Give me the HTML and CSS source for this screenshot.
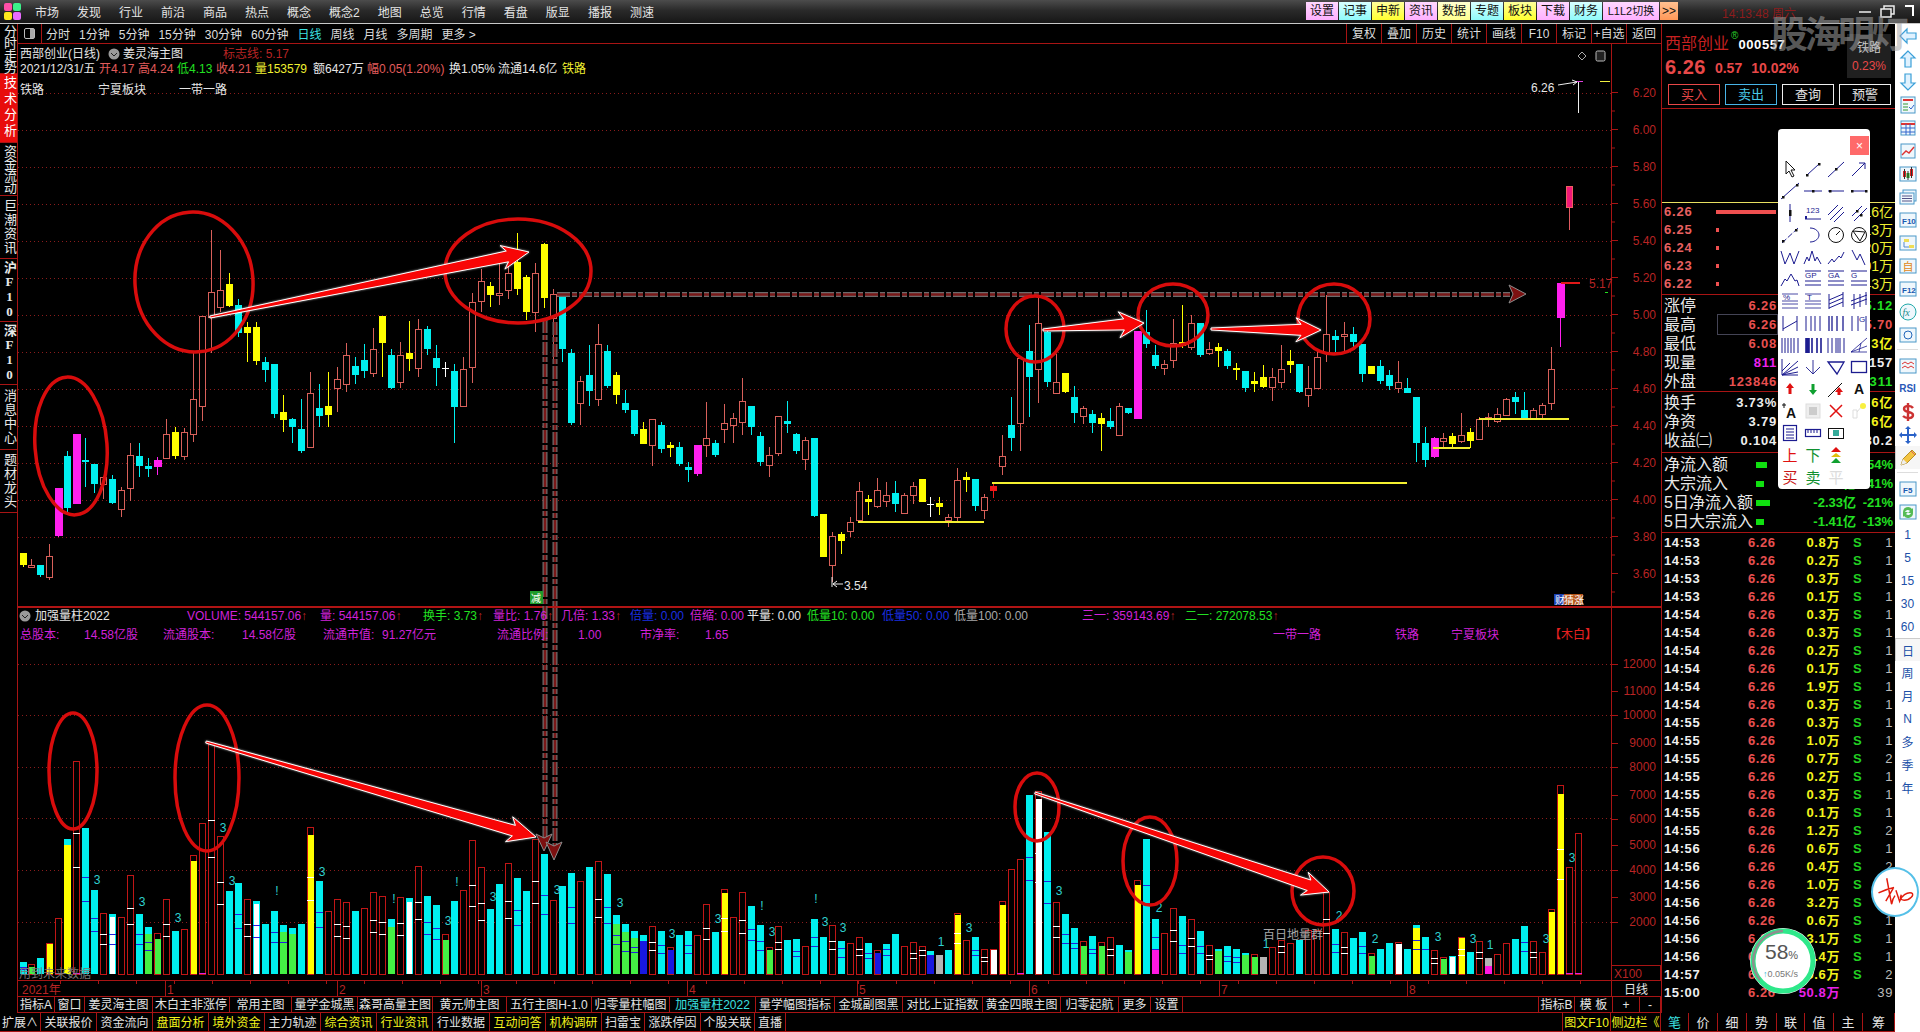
FILE: index.html
```html
<!DOCTYPE html>
<html lang="zh">
<head>
<meta charset="utf-8">
<title>西部创业 日线</title>
<link rel="stylesheet" href="styles.css">
</head>
<body>
<div class="app">
  <header class="topbar">
    <div class="logo"><i class="lp"></i><i class="lg"></i><i class="ly"></i><i class="lv"></i></div>
    <nav class="menu"><span>市场</span><span>发现</span><span>行业</span><span>前沿</span><span>商品</span><span>热点</span><span>概念</span><span>概念2</span><span>地图</span><span>总览</span><span>行情</span><span>看盘</span><span>版显</span><span>播报</span><span>测速</span></nav>
    <div class="quick"><span class="qp">设置</span><span class="qc">记事</span><span class="qy">申新</span><span class="qp">资讯</span><span class="ql">数据</span><span class="qc">专题</span><span class="qy">板块</span><span class="qp">下载</span><span class="qc">财务</span><span class="qp wide">L1L2切换</span><span class="qo">&gt;&gt;</span></div>
    <div class="clock">14:13:48 周六</div>
    <div class="winctl">
      <svg viewBox="0 0 60 20"><path class="wc" d="M4 10h12M26 7h10v8H26zM29 7V4h10v8h-3"/><path class="wc2" d="M50 4h8v10"/></svg>
    </div>
  </header>

  <div class="body">
    <div class="left">
      <div class="workspace">
        <aside class="sidebar">
          <div class="sb tight">分时走势</div>
          <div class="sb on">技术分析</div>
          <div class="sb tight">资金流动</div>
          <div class="sb">巨潮资讯</div>
          <div class="sb fk">沪F10</div>
          <div class="sb fk">深F10</div>
          <div class="sb">消息中心</div>
          <div class="sb">题材龙头</div>
        </aside>

        <main class="center">
          <div class="periods">
            <div class="toggle"><i></i></div>
            <div class="plist"><span>分时</span><span>1分钟</span><span>5分钟</span><span>15分钟</span><span>30分钟</span><span>60分钟</span><span class="act">日线</span><span>周线</span><span>月线</span><span>多周期</span><span>更多 &gt;</span></div>
            <div class="tools"><span>复权</span><span>叠加</span><span>历史</span><span>统计</span><span>画线</span><span>F10</span><span>标记</span><span>+自选</span><span>返回</span></div>
          </div>

          <svg id="chart" class="chart" viewBox="18 44 1643 952" width="1643" height="952">
            <g class="t" transform="translate(0,1)">
              <text x="20" y="57" class="w">西部创业(日线)</text>
              <circle cx="114" cy="53" r="5.5" class="ci"/><path d="M111 52l3 3 3-3" class="cv"/>
              <text x="123" y="57" class="w">姜灵海主图</text>
              <text x="223" y="57" class="rd">标志线: 5.17</text>
              <text x="20" y="72" class="w">2021/12/31/五</text>
              <text x="99" y="72" class="rr">开4.17</text>
              <text x="138" y="72" class="rr">高4.24</text>
              <text x="177" y="72" class="gg">低4.13</text>
              <text x="216" y="72" class="rr">收4.21</text>
              <text x="255" y="72" class="yy">量153579</text>
              <text x="313" y="72" class="w">额6427万</text>
              <text x="367" y="72" class="rr">幅0.05(1.20%)</text>
              <text x="449" y="72" class="w">换1.05%</text>
              <text x="498" y="72" class="w">流通14.6亿</text>
              <text x="562" y="72" class="yy">铁路</text>
              <text x="20" y="93" class="w">铁路</text>
              <text x="98" y="93" class="w">宁夏板块</text>
              <text x="179" y="93" class="w">一带一路</text>
              <path d="M1582 51l4 4-4 4-4-4z" class="dm"/>
              <rect x="1596" y="50" width="9" height="10" rx="1.5" class="tg"/>
              <text x="1531" y="91" class="w">6.26</text>
              <text x="844" y="589" class="w">3.54</text>
              <text x="1589" y="287" class="rd">5.17</text>

              <circle cx="25" cy="615" r="5.5" class="ci"/><path d="M22 614l3 3 3-3" class="cv"/>
              <text x="35" y="619" class="w">加强量柱2022</text>
              <text x="187" y="619" class="mg">VOLUME: 544157.06<tspan class="rd">↑</tspan></text>
              <text x="320" y="619" class="mg">量: 544157.06<tspan class="rd">↑</tspan></text>
              <text x="423" y="619" class="gg">换手: 3.73<tspan class="rd">↑</tspan></text>
              <text x="493" y="619" class="mg">量比: 1.76<tspan class="rd">↑</tspan></text>
              <text x="561" y="619" class="mg">几倍: 1.33<tspan class="rd">↑</tspan></text>
              <text x="630" y="619" class="bl">倍量: 0.00</text>
              <text x="690" y="619" class="mg">倍缩: 0.00</text>
              <text x="747" y="619" class="w">平量: 0.00</text>
              <text x="807" y="619" class="gg">低量10: 0.00</text>
              <text x="882" y="619" class="bl">低量50: 0.00</text>
              <text x="954" y="619" class="gy">低量100: 0.00</text>
              <text x="1082" y="619" class="mg">三一: 359143.69<tspan class="rd">↑</tspan></text>
              <text x="1185" y="619" class="gg">二一: 272078.53<tspan class="rd">↑</tspan></text>

              <text x="20" y="638" class="mg">总股本:</text><text x="84" y="638" class="mg">14.58亿股</text>
              <text x="163" y="638" class="mg">流通股本:</text><text x="242" y="638" class="mg">14.58亿股</text>
              <text x="323" y="638" class="mg">流通市值:</text><text x="382" y="638" class="mg">91.27亿元</text>
              <text x="497" y="638" class="mg">流通比例:</text><text x="578" y="638" class="mg">1.00</text>
              <text x="640" y="638" class="mg">市净率:</text><text x="705" y="638" class="mg">1.65</text>
              <text x="1273" y="638" class="mg">一带一路</text>
              <text x="1395" y="638" class="mg">铁路</text>
              <text x="1451" y="638" class="mg">宁夏板块</text>
              <text x="1549" y="638" class="rb">【木白】</text>

              <text x="1263" y="938" class="gy">百日地量群</text>
              <text x="19" y="977" class="dim">用到未来数据</text>
              <text x="22" y="993" class="rd">2021年</text>
              <text x="167" y="993" class="rd">1</text>
              <text x="339" y="993" class="rd">2</text>
              <text x="483" y="993" class="rd">3</text>
              <text x="689" y="993" class="rd">4</text>
              <text x="859" y="993" class="rd">5</text>
              <text x="1031" y="993" class="rd">6</text>
              <text x="1221" y="993" class="rd">7</text>
              <text x="1409" y="993" class="rd">8</text>
              <text x="1614" y="977" class="rd">X100</text>
              <text x="1624" y="993" class="w">日线</text>

              <rect x="530" y="590" width="13" height="13" class="tag-g"/>
              <text x="531" y="601" class="tagt">减</text>
              <rect x="1554" y="593" width="10" height="11" class="tag-b"/>
              <rect x="1564" y="593" width="19" height="11" class="tag-o"/>
              <text x="1555" y="603" class="tagt">财</text>
              <text x="1564" y="603" class="tagt">猜涨</text>
            </g>
          </svg>

          <div class="tabs1">
            <span>指标A</span><span>窗口</span><span>姜灵海主图</span><span>木白主非涨停</span><span>常用主图</span><span>量学金城黑</span><span>森哥高量主图</span><span>黄元帅主图</span><span>五行主图H-1.0</span><span>归零量柱幅图</span><span class="act">加强量柱2022</span><span>量学幅图指标</span><span>金城副图黑</span><span>对比上证指数</span><span>黄金四眼主图</span><span>归零起航</span><span>更多</span><span>设置</span><span class="fill"></span><span>指标B</span><span>模 板</span><span>+</span><span>-</span>
          </div>
        </main>

        <section class="panel">
          <div class="quote">
            <div class="qname"><span class="nm">西部创业</span><sup class="reg">®</sup><span class="cd">000557</span></div>
            <div class="qprice"><b>6.26</b><span>0.57</span><span>10.02%</span></div>
            <div class="qbtns"><span class="b1">买入</span><span class="b2">卖出</span><span>查询</span><span>预警</span></div>
            <div class="sector"><span>铁路</span><b>0.23%</b></div>
          </div>
          <div class="gap"></div>
          <div class="book">
            <div class="br"><span>6.26</span><i class="long"></i><span>2.16亿</span></div>
            <div class="br"><span>6.25</span><i></i><span>1.13万</span></div>
            <div class="br"><span>6.24</span><i></i><span>1.20万</span></div>
            <div class="br"><span>6.23</span><i></i><span>1.01万</span></div>
            <div class="br"><span>6.22</span><i></i><span>1.43万</span></div>
          </div>
          <div class="stats s5">
            <div class="sr"><span>涨停</span><span class="red">6.26</span><span class="grn">5.12</span></div>
            <div class="sr"><span>最高</span><span class="red boxed">6.26</span><span class="red">5.70</span></div>
            <div class="sr"><span>最低</span><span class="red">6.08</span><span class="yel">1.3亿</span></div>
            <div class="sr"><span>现量</span><span class="mag">811</span><span class="wht">247157</span></div>
            <div class="sr"><span>外盘</span><span class="red">123846</span><span class="grn">123311</span></div>
          </div>
          <div class="stats s3">
            <div class="sr"><span>换手</span><span class="wht">3.73%</span><span class="yel">14.6亿</span></div>
            <div class="sr"><span>净资</span><span class="wht">3.79</span><span class="yel">14.6亿</span></div>
            <div class="sr"><span>收益㈡</span><span class="wht">0.104</span><span class="wht">80.2</span></div>
          </div>
          <div class="flows">
            <div class="fr"><span>净流入额</span><i class="f1"></i><span>-0.79亿</span><span>-54%</span></div>
            <div class="fr"><span>大宗流入</span><i class="f2"></i><span>-0.60亿</span><span>-41%</span></div>
            <div class="fr"><span>5日净流入额</span><i class="f3"></i><span>-2.33亿</span><span>-21%</span></div>
            <div class="fr"><span>5日大宗流入</span><i class="f2"></i><span>-1.41亿</span><span>-13%</span></div>
          </div>
          <div class="trades">
            <div class="tr"><span>14:53</span><span>6.26</span><span>0.8万</span><span>S</span><span>1</span></div>
            <div class="tr"><span>14:53</span><span>6.26</span><span>0.2万</span><span>S</span><span>1</span></div>
            <div class="tr"><span>14:53</span><span>6.26</span><span>0.3万</span><span>S</span><span>1</span></div>
            <div class="tr"><span>14:53</span><span>6.26</span><span>0.1万</span><span>S</span><span>1</span></div>
            <div class="tr"><span>14:54</span><span>6.26</span><span>0.3万</span><span>S</span><span>1</span></div>
            <div class="tr"><span>14:54</span><span>6.26</span><span>0.3万</span><span>S</span><span>1</span></div>
            <div class="tr"><span>14:54</span><span>6.26</span><span>0.2万</span><span>S</span><span>1</span></div>
            <div class="tr"><span>14:54</span><span>6.26</span><span>0.1万</span><span>S</span><span>1</span></div>
            <div class="tr"><span>14:54</span><span>6.26</span><span>1.9万</span><span>S</span><span>1</span></div>
            <div class="tr"><span>14:54</span><span>6.26</span><span>0.3万</span><span>S</span><span>1</span></div>
            <div class="tr"><span>14:55</span><span>6.26</span><span>0.3万</span><span>S</span><span>1</span></div>
            <div class="tr"><span>14:55</span><span>6.26</span><span>1.0万</span><span>S</span><span>1</span></div>
            <div class="tr"><span>14:55</span><span>6.26</span><span>0.7万</span><span>S</span><span>2</span></div>
            <div class="tr"><span>14:55</span><span>6.26</span><span>0.2万</span><span>S</span><span>1</span></div>
            <div class="tr"><span>14:55</span><span>6.26</span><span>0.3万</span><span>S</span><span>1</span></div>
            <div class="tr"><span>14:55</span><span>6.26</span><span>0.1万</span><span>S</span><span>1</span></div>
            <div class="tr"><span>14:55</span><span>6.26</span><span>1.2万</span><span>S</span><span>2</span></div>
            <div class="tr"><span>14:56</span><span>6.26</span><span>0.6万</span><span>S</span><span>1</span></div>
            <div class="tr"><span>14:56</span><span>6.26</span><span>0.4万</span><span>S</span><span>2</span></div>
            <div class="tr"><span>14:56</span><span>6.26</span><span>1.0万</span><span>S</span><span>1</span></div>
            <div class="tr"><span>14:56</span><span>6.26</span><span>3.2万</span><span>S</span><span>1</span></div>
            <div class="tr"><span>14:56</span><span>6.26</span><span>0.6万</span><span>S</span><span>1</span></div>
            <div class="tr"><span>14:56</span><span>6.26</span><span>3.1万</span><span>S</span><span>1</span></div>
            <div class="tr"><span>14:56</span><span>6.26</span><span>0.4万</span><span>S</span><span>1</span></div>
            <div class="tr"><span>14:57</span><span>6.26</span><span>0.6万</span><span>S</span><span>2</span></div>
            <div class="tr last"><span>15:00</span><span>6.26</span><span>50.8万</span><span></span><span>39</span></div>
          </div>
        </section>
      </div>

      <footer class="tabs2">
        <span>扩展∧</span><span>关联报价</span><span>资金流向</span><span class="yel">盘面分析</span><span class="yel">境外资金</span><span>主力轨迹</span><span class="yel">综合资讯</span><span class="yel">行业资讯</span><span>行业数据</span><span class="yel">互动问答</span><span class="yel">机构调研</span><span>扫雷宝</span><span>涨跌停因</span><span>个股关联</span><span>直播</span><span class="fill"></span><span class="yel">图文F10</span><span class="yel">侧边栏《</span><span class="act big">笔</span><span class="big">价</span><span class="big">细</span><span class="big">势</span><span class="big">联</span><span class="big">值</span><span class="big">主</span><span class="big">筹</span>
      </footer>
    </div>

    <nav class="rail" id="rail">
      <div class="ri"><svg viewBox="0 0 20 20"><path class="ar" d="M9 3 2 10l7 7v-4h9V7H9z"/></svg></div>
      <div class="ri"><svg viewBox="0 0 20 20"><path class="ar" d="M10 2 3 9h4v9h6V9h4z"/></svg></div>
      <div class="ri"><svg viewBox="0 0 20 20"><path class="ar" d="M10 18 3 11h4V2h6v9h4z"/></svg></div>
      <div class="ri"><svg viewBox="0 0 20 20"><rect x="3" y="2" width="14" height="16" class="bx"/><path d="M5 5h10" stroke="#d33" stroke-width="2"/><path d="M5 9h5M5 12h5M5 15h5" stroke="#393"/><path d="M11 12l2 2 3-4" stroke="#36c" fill="none"/></svg></div>
      <div class="ri"><svg viewBox="0 0 20 20"><rect x="3" y="3" width="14" height="14" class="bx"/><path d="M3 6h14" stroke="#d33" stroke-width="2"/><path d="M3 10h14M3 14h14M8 6v11M12 6v11" stroke="#36c"/></svg></div>
      <div class="ri"><svg viewBox="0 0 20 20"><rect x="3" y="3" width="14" height="14" class="bx"/><path d="M4 14l4-4 3 2 5-6" stroke="#d33" fill="none" stroke-width="1.4"/></svg></div>
      <div class="ri"><svg viewBox="0 0 20 20"><rect x="2" y="3" width="16" height="14" class="bx"/><path d="M5 7h3v6H5zM12 5h3v7h-3z" fill="#d22"/><path d="M8.500 9h3v5h-3z" fill="#2a2"/><path d="M6.500 5v10M13.500 3v11M10 7v9" stroke="#333"/></svg></div>
      <div class="ri"><svg viewBox="0 0 20 20"><rect x="5" y="3" width="13" height="11" class="bx"/><rect x="2" y="6" width="14" height="11" class="bx"/><path d="M4 9h10M4 11.500h10M4 14h10" stroke="#558"/></svg></div>
      <div class="ri"><svg viewBox="0 0 20 20"><rect x="2" y="3" width="16" height="14" class="bx"/><text x="4" y="14" class="rt">F10</text></svg></div>
      <div class="ri"><svg viewBox="0 0 20 20"><rect x="2" y="3" width="16" height="14" class="bx"/><path d="M6 6h5v3H6zM11 12h5v3h-5z" fill="#ed5"/><path d="M6 9v5h5" stroke="#58c" fill="none"/></svg></div>
      <div class="ri"><svg viewBox="0 0 20 20"><rect x="2" y="3" width="16" height="14" class="bx"/><text x="4.500" y="15" class="ro">自</text></svg></div>
      <div class="ri"><svg viewBox="0 0 20 20"><rect x="2" y="3" width="16" height="14" class="bx"/><text x="4" y="14" class="rt">F12</text></svg></div>
      <div class="ri"><svg viewBox="0 0 20 20"><circle cx="10" cy="10" r="8" class="bx tl"/><text x="4.500" y="14" class="rg">fx</text></svg></div>
      <div class="ri"><svg viewBox="0 0 20 20"><rect x="2" y="3" width="16" height="14" class="bx"/><circle cx="10" cy="10" r="4" fill="none" stroke="#26b"/></svg></div>
      <div class="rsep"></div>
      <div class="ri"><svg viewBox="0 0 20 20"><rect x="2" y="3" width="16" height="14" class="bx"/><path d="M4 8l3-2 3 2 3-2 3 2M4 12l3-2 3 2 3-2 3 2" stroke="#d33" fill="none"/></svg></div>
      <div class="ri rsi">RSI</div>
      <div class="ri"><svg viewBox="0 0 20 20"><path d="M15 6c-2-3-9-3-9 1 0 4 9 2 9 6 0 4-7 4-10 1M10 1v18" stroke="#c33" stroke-width="2.400" fill="none"/></svg></div>
      <div class="ri"><svg viewBox="0 0 20 20"><path d="M10 1l3 3h-2v5h5V7l3 3-3 3v-2h-5v5h2l-3 3-3-3h2v-5H4v2l-3-3 3-3v2h5V4H7z" fill="#2a62c8"/></svg></div>
      <div class="ri sel"><svg viewBox="0 0 20 20"><path d="M3 17l2-6L14 2l4 4-9 9z" fill="#f4c542" stroke="#b6902a"/><path d="M3 17l2-6 4 4z" fill="#eee"/><path d="M13 3l4 4" stroke="#d65"/></svg></div>
      <div class="rsep"></div>
      <div class="ri"><svg viewBox="0 0 20 20"><rect x="2" y="3" width="16" height="14" class="bx"/><text x="5" y="14" class="rt">F5</text></svg></div>
      <div class="ri"><svg viewBox="0 0 20 20"><rect x="2" y="3" width="16" height="14" class="bx"/><path d="M5 10a5 5 0 0 1 9-3l1-1v5h-5l2-2a3 3 0 0 0-5 1zM15 11a5 5 0 0 1-9 3l-1 1v-5h5l-2 2a3 3 0 0 0 5-1z" fill="#5b5"/></svg></div>
      <div class="ri txt">1</div>
      <div class="ri txt">5</div>
      <div class="ri txt">15</div>
      <div class="ri txt">30</div>
      <div class="ri txt">60</div>
      <div class="ri txt cur">日</div>
      <div class="ri txt">周</div>
      <div class="ri txt">月</div>
      <div class="ri txt">N</div>
      <div class="ri txt">多</div>
      <div class="ri txt">季</div>
      <div class="ri txt">年</div>
    </nav>
  </div>

  <div class="watermark">股海明灯</div>

  <div class="palette">
    <button class="pclose">×</button>
    <div class="pgrid" id="pgrid"></div>
  </div>

  <div class="sig"><svg viewBox="0 0 48 48"><path d="M6 25c6-3 12-5 17-6M15 9l5 27c1 3 0-3 4-8M22 20l-8 14M25 22l4 12c2-6 8-10 13-9 4 2-2 8-8 8-4 0-5-3-3-6" fill="none" stroke="#e21b0c" stroke-width="1.600"/></svg></div>

  <div class="speed">
    <svg viewBox="0 0 66 66"><circle cx="33" cy="33" r="30" class="sp1"/><path d="M33 3A30 30 0 0 0 10 52" class="sp2"/></svg>
    <div class="spt"><b>58</b><small>%</small></div>
    <div class="spk"><i>↑</i>0.05K/s</div>
  </div>
</div>
<script src="chart.js"></script>
</body>
</html>
```

FILE: styles.css
```css
*{box-sizing:border-box}
html,body{margin:0;padding:0;background:#000}
body{width:1920px;height:1032px;overflow:hidden;font-family:"Liberation Sans","Noto Sans CJK SC",sans-serif;font-size:12px;color:#ddd}
.app{position:relative;width:1920px;height:1032px;display:flex;flex-direction:column}

/* top */
.topbar{height:24px;display:flex;align-items:center;background:linear-gradient(#4c4c4c,#2a2a2a 45%,#161616);border-bottom:1px solid #c8c8c8;flex:none}
.logo{width:18px;height:17px;margin-left:4px;display:grid;grid-template-columns:8px 8px;grid-auto-rows:8px;gap:1px}
.logo i{border-radius:2px}
.lp{background:#ff4fa8}.lg{background:#3cf08a}.ly{background:#ffe81c}.lv{background:#e86cff}
.menu{display:flex;gap:18px;margin-left:13px;font-size:12px;color:#e4e4e4}
.quick{position:absolute;left:1306px;top:2px;display:flex;gap:1px;color:#111}
.quick span{width:32px;height:18px;line-height:18px;text-align:center;display:block}
.quick .wide{width:56px;font-size:11px}
.quick .qo{width:18px}
.qp{background:linear-gradient(#ffd8ff,#ffb0ff)}
.qc{background:linear-gradient(#d8ffff,#90fafa)}
.qy{background:linear-gradient(#ffff9a,#ffff30)}
.ql{background:linear-gradient(#ffffd0,#ffff90)}
.qo{background:linear-gradient(#ffc090,#ff9858)}
.clock{position:absolute;left:1722px;top:4px;color:#8c1c1c;font-size:12px}
.winctl{position:absolute;left:1852px;top:2px;width:66px;height:20px}
.winctl svg{display:block;width:66px;height:20px}
.wc{fill:none;stroke:#eee;stroke-width:1.5}
.wc2{fill:none;stroke:#fff;stroke-width:2}

.body{flex:1;display:flex;min-height:0}
.left{width:1895px;display:flex;flex-direction:column}
.workspace{flex:1;display:flex;min-height:0}

/* sidebar */
.sidebar{width:18px;flex:none;border-right:1px solid #a81414;display:grid;grid-template-rows:50px 69px 53px 63px 63px 63px 65px 63px 1fr}
.sb{writing-mode:vertical-rl;text-orientation:upright;font-size:13px;line-height:15px;width:17px;letter-spacing:1px;text-align:center;border-bottom:1px solid #a81414;color:#e8e8e8}
.sb.tight{letter-spacing:-1px}
.sb.on{background:#e80c0c;color:#fff;letter-spacing:3px}
.sb.fk{font-family:"Liberation Serif","Noto Sans CJK SC",serif;font-weight:700;letter-spacing:0}

/* center */
.center{width:1643px;flex:none;display:flex;flex-direction:column;min-height:0}
.periods{height:20px;flex:none;display:flex;align-items:center;border-bottom:1px solid #a81414}
.toggle{width:24px;height:19px;border-right:1px solid #a81414;display:flex;align-items:center;justify-content:center}
.toggle i{display:block;width:11px;height:11px;border:1px solid #bbb;border-radius:2px;background:linear-gradient(90deg,#000 60%,#aaa 60%)}
.plist{display:flex;gap:9px;margin-left:4px;color:#ddd}
.act{color:#3be0e0}
.tools{margin-left:auto;display:flex;height:19px}
.tools span{width:35px;line-height:21px;text-align:center;border-left:1px solid #a81414;color:#ddd}

.chart{display:block;width:1643px;height:952px;flex:none}
.chart text{font-size:12px;font-family:"Liberation Sans","Noto Sans CJK SC",sans-serif}
.w{fill:#e6e6e6}.rd{fill:#b82424}.rr{fill:#e25c5c}.gg{fill:#22e022}.yy{fill:#f0f030}.mg{fill:#d022d8}.bl{fill:#1a2ee0}.gy{fill:#a8a8a8}.dim{fill:#777}.rb{fill:#e82020}
.ci{fill:#9a9a9a}.cv{fill:none;stroke:#222}
.dm{fill:none;stroke:#aaa}.tg{fill:#222;stroke:#bbb}
.tag-g{fill:#1f9a2a}.tag-b{fill:#1c3fb0}.tag-o{fill:#b5561a}
.chart .tagt{font-size:10px;fill:#fff}
.chart .note{font-size:12px;fill:#2fd0d0}

.tabs1{height:17px;flex:none;display:grid;grid-template-columns:37px 30px 68px 77px 62px 66px 75px 74px 85px 78px 86px 79px 68px 80px 78px 58px 32px 32px 1fr 36px 38px 27px 21px;border-top:1px solid #a81414;border-bottom:1px solid #a81414;line-height:17px;white-space:nowrap}
.tabs1 span{border-right:1px solid #a81414;text-align:center;overflow:hidden;color:#e4e4e4}
.tabs1 .act{color:#3be0e0}
.tabs1 .fill{border-right:1px solid #a81414}

.tabs2{height:19px;flex:none;display:grid;grid-template-columns:41px 56px 56px 56px 56px 56px 56px 56px 57px 56px 56px 43px 56px 54px 31px 1fr 48px 50px 28px 29px 29px 30px 28px 29px 29px 32px;border-bottom:1px solid #a81414;line-height:20px;white-space:nowrap}
.tabs2 span{border-right:1px solid #a81414;text-align:center;color:#e4e4e4;overflow:hidden}
.tabs2 .yel{color:#f4f41c}
.tabs2 .act{color:#3be0e0}
.tabs2 .big{font-size:13px}

/* panel */
.panel{width:234px;flex:none;border-left:1px solid #a81414;display:flex;flex-direction:column;min-height:0}
.quote{height:85px;flex:none;position:relative;border-bottom:1px solid #a81414;padding-left:3px}
.qname{height:31px;display:flex;align-items:flex-end;color:#c82020}
.nm{font-size:16px;line-height:22px}
.reg{font-size:10px;color:#2ad02a;align-self:flex-start;margin:7px 0 0 2px;line-height:10px}
.cd{color:#fff;font-weight:700;font-size:13px;letter-spacing:.6px;line-height:21px;margin-left:0}
.qprice{height:23px;display:flex;align-items:center;gap:9px;color:#e84848;font-weight:700;font-size:14px;margin-top:1px}
.qprice b{font-size:20px;letter-spacing:.5px}
.qbtns{display:flex;gap:5px;margin:5px 0 0 3px}
.qbtns span{width:52px;height:21px;line-height:19px;text-align:center;border:1px solid #eee;color:#e4e4e4;font-size:13px}
.qbtns .b1{border-color:#e84848;color:#e84848}
.qbtns .b2{border-color:#48b4e8;color:#48c8e8}
.sector{position:absolute;left:185px;top:10px;width:44px;height:44px;background:#202020;text-align:center;padding-top:6px}
.sector span{display:block;color:#ccc;line-height:16px}
.sector b{display:block;color:#e84848;font-size:12px;font-weight:400;margin-top:3px}
.gap{height:93px;flex:none}
.book{height:93px;flex:none;border-top:1px solid #e8e060;border-bottom:1px solid #a81414;padding:0 2px}
.br{height:18px;line-height:18px;display:grid;grid-template-columns:52px 60px 1fr;align-items:center;color:#e86060;font-weight:700;font-size:13px;letter-spacing:.8px}
.br i{display:block;width:3px;height:4px;background:#f05050}
.br i.long{width:60px;height:4px}
.br span:last-child{text-align:right;color:#f0f030;font-weight:400;font-size:14px;letter-spacing:0}
.stats{flex:none;border-bottom:1px solid #a81414;padding:1px 2px 0}
.s5{height:97px}
.s3{height:61px}
.sr{height:19px;line-height:19px;display:grid;grid-template-columns:54px 59px 1fr;align-items:center;font-size:16px;white-space:nowrap;color:#e8e8e8}
.sr span:nth-child(2),.sr span:nth-child(3){text-align:right;font-size:13px;font-weight:700;letter-spacing:.8px}
.red{color:#e85050}.grn{color:#22e022}.yel{color:#f4f41c}.mag{color:#ee22ee}.wht{color:#eee}
.sr .red{color:#e85050}.sr .grn{color:#22e022}.sr .yel{color:#f4f41c}.sr .mag{color:#ee22ee}.sr .wht{color:#eee}
.boxed{outline:1px solid #445;outline-offset:0}
.flows{height:80px;flex:none;border-bottom:1px solid #a81414;padding:2px 2px 0}
.fr{height:19px;line-height:19px;display:grid;grid-template-columns:92px 22px 78px 1fr;align-items:center;white-space:nowrap;font-size:16px;color:#e8e8e8}
.fr i{display:block;height:6px;background:#10e010}
.f1{width:11px}.f2{width:8px}.f3{width:14px}
.fr span:nth-child(3),.fr span:nth-child(4){text-align:right;color:#22e022;font-size:13px;font-weight:700}
.trades{flex:1;padding-top:1px;min-height:0}
.tr{height:18px;line-height:18px;display:grid;grid-template-columns:84px 35px 57px 13px 14px 1fr;align-items:center;padding:0 2px;font-size:13px;font-weight:700;letter-spacing:.6px;white-space:nowrap}
.tr span:nth-child(1){color:#f0f0f0}
.tr span:nth-child(2){color:#e85050}
.tr span:nth-child(3){color:#f4f41c;text-align:right}
.tr span:nth-child(4){color:#22d022;grid-column:5}
.tr span:nth-child(5){color:#bbb;text-align:right;font-weight:400;grid-column:6}
.tr.last span:nth-child(3){color:#e822e8}

/* rail */
.rail{width:25px;flex:none;background:#fff;display:flex;flex-direction:column;overflow:hidden}
.ri{height:23px;flex:none;display:flex;align-items:center;justify-content:center}
.ri svg{width:20px;height:20px;display:block}
.ar{fill:#e0f2ff;stroke:#3a9fd8;stroke-width:1.2}
.bx{fill:#eff7fc;stroke:#4a98c8}
.bx.tl{stroke:#2aa}
.rt{font-size:8px;fill:#1a5ab0;font-weight:700;font-family:"Liberation Sans",sans-serif}
.ro{font-size:11px;fill:#e08820;font-family:"Noto Sans CJK SC",sans-serif}
.rg{font-size:10px;fill:#1a8a8a;font-style:italic;font-family:"Liberation Serif",serif}
.rsep{height:8px;flex:none;position:relative}
.rsep::after{content:"";position:absolute;left:2px;right:2px;top:3px;height:1px;background:#ddd}
.rsi{font-size:10px;font-weight:700;color:#2858b8}
.txt{font-size:12px;color:#2050a8}
.sel{background:#f6f6f6;border-left:1px solid #ccc}
.cur{background:#f6f6f6;border-left:1px solid #ccc;border-top:1px solid #ccc}

/* overlays */
.watermark{position:absolute;left:1771px;top:14px;font-size:37px;letter-spacing:-3.5px;line-height:44px;font-weight:700;color:rgba(165,165,165,.55);pointer-events:none;z-index:5;white-space:nowrap}
.palette{position:absolute;left:1778px;top:129px;width:92px;height:360px;background:#fff;border-radius:4px;z-index:4;padding-top:29px}
.pclose{position:absolute;left:72px;top:7px;width:19px;height:19px;border:0;padding:0;background:#ff6a6a;color:#fff;font-size:12px;font-family:"Liberation Sans",sans-serif}
.pgrid{display:grid;grid-template-columns:repeat(4,23px);grid-auto-rows:22px}
.pi{display:flex;align-items:center;justify-content:center}
.pi svg{width:20px;height:20px;display:block;fill:none;stroke:#1c1c90;stroke-width:1}
.pi text{stroke:none;fill:#1c1c90;font-size:8px;font-family:"Liberation Sans",sans-serif}
.pi .cj{font-size:15px;font-family:"Noto Sans CJK SC",sans-serif}
.pi .ab{font-size:14px;font-weight:700;fill:#111}
.sig{position:absolute;left:1871px;top:867px;width:48px;height:50px;border-radius:50%;background:#fff;border:2px solid #55c0e8;z-index:6;overflow:hidden}
.sig svg{display:block;width:100%;height:100%}
.speed{position:absolute;left:1750px;top:928px;width:66px;height:66px;z-index:6;border-radius:50%;background:#fff;color:#555}
.speed svg{position:absolute;left:0;top:0;width:66px;height:66px}
.sp1{fill:#fff;stroke:#2ee88a;stroke-width:5}
.sp2{fill:none;stroke:#8e8e8e;stroke-width:2.500}
.spt{position:absolute;left:15px;top:12px;font-size:21px;line-height:24px;color:#555;white-space:nowrap}
.spt b{font-weight:400}
.spt small{font-size:11px}
.spk{position:absolute;left:13px;top:40px;font-size:9px;line-height:12px;color:#777;white-space:nowrap}
.spk i{font-style:normal;color:#36b8d8}
```

FILE: chart.js
```js
(function () {
  var C = {r:'#d8605a', c:'#00f0f0', y:'#ffff00', m:'#ff20ee', w:'#ffffff', R:'#f01818'};
  var xOf = function (i) { return Math.round(22.5 + i * 8.99); };
  var out = [];
  function line(x1, y1, x2, y2, cls) { out.push('<line x1="'+x1+'" y1="'+y1+'" x2="'+x2+'" y2="'+y2+'" style="'+cls+'"/>'); }
  function rect(x, y, w, h, st) { out.push('<rect x="'+x+'" y="'+y+'" width="'+w+'" height="'+h+'" style="'+st+'" shape-rendering="crispEdges"/>'); }

  /* grid */
  var DOT = 'stroke:#8a1c1c;stroke-dasharray:1 3';
  for (var g = 93; g <= 573; g += 37) line(18, g + .5, 1611, g + .5, DOT);
  [664, 715, 767, 818, 870, 922].forEach(function (y) { line(18, y + .5, 1611, y + .5, DOT); });

  var LN = 'stroke:#a81414';
  line(1611.5, 44, 1611.5, 996, LN);
  line(18, 607, 1661, 607, 'stroke:#b01414;stroke-width:2');
  line(18, 980.5, 1661, 980.5, LN);
  out.push('<rect x="1611.5" y="965.5" width="49" height="15" style="fill:none;stroke:#a81414"/>');
  [165, 337, 481, 687, 857, 1029, 1219, 1407].forEach(function (x) { line(x + .5, 981, x + .5, 996, LN); });
  for (var t = 60; t < 1600; t += 38) line(t + .5, 981, t + .5, 984, LN);

  /* price axis */
  for (var k = 0; k < 14; k++) {
    var py = 92.5 + 37 * k;
    line(1611, py, 1618, py, LN);
    line(1611, py + 18.5, 1615, py + 18.5, LN);
    out.push('<text x="1656" y="' + (py + 4) + '" text-anchor="end" class="rd">' + (6.2 - 0.2 * k).toFixed(2) + '</text>');
  }
  var vols = [[12000,664],[11000,691],[10000,715],[9000,743],[8000,767],[7000,795],[6000,819],[5000,845],[4000,870],[3000,897],[2000,922]];
  vols.forEach(function (v) {
    line(1611, v[1] + .5, 1618, v[1] + .5, LN);
    out.push('<text x="1656" y="' + (v[1] + 4) + '" text-anchor="end" class="rd">' + v[0] + '</text>');
  });

  /* candles: type,bodyTop,bodyBottom,high,low */
  var A = 'y,1060,1097,1060,1100 r,1096,1102,1078,1102 c,1096,1125,1096,1132 r,1069,1133,1033,1140 m,865,1010,865,1010 c,768,923,752,935 m,702,911,702,911 c,780,786,714,862 c,792,851,792,880 r,832,853,832,897 c,838,909,825,912 r,870,926,862,950 r,766,866,730,902 c,768,798,730,830 c,798,807,775,830 m,781,803,770,825 r,703,776,658,778 y,697,770,682,778 r,697,770,685,780 r,598,703,460,725 r,349,620,349,662 r,277,353,90,458 r,271,323,150,335 y,252,318,220,322 c,316,401,298,412 y,381,398,365,485 y,381,482,365,495 c,487,512,472,545 c,492,641,492,655 y,636,660,585,695 c,657,680,655,730 c,687,753,598,758 r,580,743,517,743 c,624,648,552,682 y,618,644,515,682 r,538,566,502,635 r,466,553,430,575 c,498,525,470,552 c,480,512,433,535 r,448,520,385,530 y,348,428,348,530 c,465,565,447,568 r,466,548,425,565 y,459,476,362,512 r,388,505,358,530 c,387,446,377,465 c,475,506,435,557 w,503,504,487,530 c,514,623,492,728 r,508,620,470,620 r,305,500,280,550 r,244,304,208,335 y,258,284,245,320 r,278,284,190,315 r,220,272,180,298 y,187,267,98,285 y,232,338,225,360 r,220,338,190,395 y,132,293,128,325 r,283,355,268,485 c,290,446,285,485 c,460,670,447,675 r,544,610,528,675 c,526,575,435,618 r,433,598,372,617 c,453,557,435,565 y,526,587,515,612'.split(' ');
  var B = 'c,489,510,450,520 c,510,582,510,588 y,567,612,545,613 r,538,616,538,678 c,556,627,545,640 y,615,624,605,650 c,621,672,605,678 c,682,692,665,725 m,615,701,615,708 r,595,617,487,650 c,609,645,600,652 r,550,569,492,608 r,535,557,520,610 r,484,546,415,585 c,498,560,498,585 c,588,665,575,678 r,645,675,620,710 r,528,640,528,648 c,544,554,484,580 c,583,633,580,642 r,600,656,590,690 c,595,828,595,832 y,822,950,822,950 r,889,977,875,1025 y,882,903,875,942 r,845,871,830,892 r,754,840,725,850 y,777,785,765,825 r,751,800,715,803 r,766,785,725,802 c,759,792,722,815 r,766,819,760,822 r,738,766,725,793 y,717,786,717,786 w,793,794,772,830 y,789,800,772,825 r,830,840,823,860 r,721,832,684,845 y,711,720,695,755 c,717,797,717,812 r,771,811,762,838 R,738,752,728,775 r,649,679,585,705 c,555,593,470,632 r,355,551,355,632 c,333,410,255,532 r,250,388,175,488 c,275,425,270,440 r,425,457,342,458 y,400,458,400,458 c,472,521,437,548 r,505,529,498,552 c,521,548,510,580 y,534,551,520,632 c,544,561,505,566 r,497,584,488,585 c,505,521,505,521 m,272,536,272,536 c,276,312,210,325 c,345,378,315,388 r,373,385,360,405 r,310,360,237,385 y,307,318,195,325 r,250,322,225,330 c,250,345,250,350 r,328,340,305,345 y,322,335,310,380 c,333,379,328,388 y,384,389,370,420 c,393,443,393,455 y,424,434,395,455 y,411,441,375,445 r,410,440,385,482 r,388,427,315,445 y,362,374,330,400 c,372,456,372,460 r,445,467,378,502 r,352,445,330,445 r,283,338,165,365 c,288,299,270,335 r,283,289,245,340 c,282,305,262,330 c,313,404,313,425 y,378,402,378,402 c,378,422,360,432 c,405,438,390,450 r,427,445,363,458 c,445,459,415,460 c,471,608,471,665 c,610,660,562,680 m,594,651,590,655 r,595,603,580,620 y,588,612,578,628 r,584,601,520,610 y,576,603,565,625 r,537,596,530,598 r,530,536,520,560 r,523,544,505,548 r,478,525,475,528 c,472,488,457,522 c,510,534,457,538 r,511,534,505,538 r,495,522,490,535 r,388,491,320,510 m,130,236,130,320'.split(' ');

  function candle(i, s, off) {
    var p = s.split(','), ty = p[0];
    var top = off + p[1] / 3, bot = off + p[2] / 3, hi = off + p[3] / 3, lo = off + p[4] / 3;
    var x = xOf(i), col = C[ty];
    line(x + .5, Math.round(hi), x + .5, Math.round(lo), 'stroke:' + col);
    var h = Math.max(1, Math.round(bot - top));
    if (ty === 'r') out.push('<rect x="' + (x - 2.5) + '" y="' + (Math.round(top) + .5) + '" width="6" height="' + h + '" style="fill:#000;stroke:' + col + '"/>');
    else if (ty === 'm') rect(x - 3, Math.round(top), 8, h, 'fill:' + col);
    else if (ty === 'w') rect(x - 3, Math.round(top), 7, 1, 'fill:' + col);
    else rect(x - 3, Math.round(top), 7, h, 'fill:' + col);
  }
  A.forEach(function (s, i) { candle(i, s, 200); });
  B.forEach(function (s, i) { candle(i + 67, s, 240); });

  /* last two bars at the right edge */
  line(xOf(172) + .5, 186, xOf(172) + .5, 230, 'stroke:#e05a60');
  out.push('<rect x="' + (xOf(172) - 2.5) + '" y="186.500" width="6" height="21" style="fill:#f01878;stroke:#f06060"/>');
  line(1578.5, 81, 1578.5, 113, 'stroke:#eee');
  rect(1575, 81, 8, 1, 'fill:#e040e0');
  rect(1600, 81, 10, 1, 'fill:#f0f040');
  line(1561, 283, 1580, 283, 'stroke:#e01818;stroke-width:2');
  rect(1605, 292, 3, 1, 'fill:#22e022');

  /* levels */
  var Y = 'stroke:#f4f030;stroke-width:2';
  line(992, 483, 1407, 483, Y);
  line(858, 522, 984, 522, Y);
  line(1433, 448, 1470, 448, Y);
  line(1479, 419, 1569, 419, Y);

  /* little pointers */
  out.push('<path d="M1558 85l19-3m-5-2 5 2-4 3" style="fill:none;stroke:#eee"/>');
  out.push('<path d="M843 584h-10m4-3-4 3 4 3M832 577v10" style="fill:none;stroke:#eee"/>');

  /* volume bars: kind,top,split,t1,t2 */
  var VA = 'c,787,0,800,806 rg,793,800 c,775 ry,728,733 r,655 cy,418,435 r,184,0,400,502 c,385,0,532,604 c,571,0,655,694 r,640,0,703,731 cw,643,652,703,731 r,652 r,526,0,625,673 c,643,0,703,731 cg,682,703,727,751 rg,700,717 r,598,0,673,709 c,694 r,688 ry,466,484 r,370 r,130,0,361,472 r,409,0,547,613 c,574 c,550,0,643,685 r,598,0,673,709 cw,604,612,676,712 c,672 c,634,0,697,727 cg,676,697,727,727 cg,685,703 c,672 ry,382,405,532,601 c,544,0,637,682 r,634 r,598,0,673,709 r,607,0,679,715 c,634 r,625 r,577,0,661,697 r,589,0,667,703 cg,658,682 r,592,0,670,706 cw,595,606 r,499,0,607,658 c,589,0,667,703 c,616,0,685,718 rg,703,721 c,604 r,571 r,421,0,556,619 r,502,0,610,661 c,628 c,553 r,490,0,604,655 c,535,0,631,676 c,574 r,418,0,544,610 c,463,0,586,643 r,601 c,559 c,520,0,622,670 r,544 c,502 r,484,0,598,652 c,523,0,622,670 cg,646,673,706,733'.split(' ');
  var VB = 'cg,552,575,604,632 cg,574,594,620,636 cb,586,603 r,559,0,606,630 c,574,0,616,640 rb,622,630 c,586 c,574,0,616,638 r,586 r,493,0,565,598 c,576 ry,448,460,533,574 r,532 r,457,0,540,580 c,498,0,568,601 c,555,0,604,630 rg,620,630 r,559,0,606,628 c,600 c,597,0,632,648 r,619 c,537,0,591,618 c,591 r,556,0,604,628 c,603,0,625,652 r,610 r,592,0,628,646 c,609,0,640,654 rb,631,640 c,612,0,628,645 c,582 r,619 r,607,0,640,655 r,617,0,630,645 cb,633,645 a,645,0 c,630 ry,518,525,580,610 r,601 c,591,0,631,645 r,628,0,652,664 rw,628,630 ry,484,495 r,388 r,358 c,165,0,350,420 rw,152,178,340,425 c,276,0,422,490 r,487,0,558,592 c,522,0,582,610 c,564,0,609,625 rg,604,618 c,588,0,627,640 rg,607,618 r,592,0,628,646 c,615 cg,630,637 ry,421,435 c,297,0,435,490 cm,537,628,592,628 r,580 r,505,0,570,603 c,528,0,614,640 r,538,0,594,618 c,573,0,618,640 r,616,0,644,658 cg,628,632 c,618,0,647,662 c,628,0,652,665 cg,640,645 rg,643,652 a,652 r,622 r,600,0,617,635 r,610 c,600 r,570 r,570 r,457,0,538,578 c,568,0,613,635 r,577,0,620,640 c,594 c,577,0,618,640 rg,640,648 c,628 c,609 rw,607,612 c,628 cy,556,565,601,628 c,591,0,628,628 r,630,0,655,668 rg,650,658 cw,648,650 ry,590,594,628,646 c,636 r,604,0,637,655 am,655,678 r,643 r,610 c,597 c,559,0,607,633 r,603,0,636,652 r,637 ry,508,516 ry,136,161,328,418 r,382 r,280'.split(' ');
  var LOW = {g:'#44f044', y:'#ffff00', w:'#ffffff', b:'#1818e0', m:'#ff18e0'};
  function bar(i, s, off) {
    var p = s.split(','), kind = p[0], top = Math.round(off + p[1] / 3);
    var split = +p[2] ? Math.round(off + p[2] / 3) : 0;
    var x = xOf(i) - 3, up = kind[0], lo = kind[1];
    if (up === 'c') rect(x, top, 7, 974 - top, 'fill:#00f0f0');
    else if (up === 'a') rect(x, top, 7, 974 - top, 'fill:#b4b4b4');
    else out.push('<rect x="' + (x + .5) + '" y="' + (top + .5) + '" width="6" height="' + (974 - top) + '" style="fill:#000;stroke:#c01616"/>');
    if (lo) {
      if (lo === 'w' && up === 'c') rect(x + 1, split, 5, 974 - split, 'fill:#fff');
      else rect(x + (up === 'r' ? 1 : 0), split, up === 'r' ? 6 : 7, 974 - split, 'fill:' + LOW[lo]);
    }
    var tc = up === 'c' ? '#2020e0' : '#ffffff';
    [p[3], p[4]].forEach(function (t) { if (+t) rect(x, Math.round(off + t / 3), 7, 1, 'fill:' + tc); });
  }
  VA.forEach(function (s, i) { bar(i, s, 700); });
  VB.forEach(function (s, i) { bar(i + 67, s, 740); });
  [4, 6, 20, 111, 172, 173].forEach(function (i) { rect(xOf(i) - 3, 973, 7, 1, 'fill:#e020e0'); });

  /* markers over bars */
  var notes = [['3',97,884],['3',142,906],['3',178,922],['3',223,832],['3',232,885],['3',322,876],['!',277,895],['!',394,903],['3',448,925],['!',457,886],['3',493,901],['3',557,894],['3',620,907],['3',672,938],['3',718,923],['!',762,910],['3',772,936],['!',816,903],['3',825,926],['3',843,932],['1',941,946],['3',969,932],['3',1059,895],['2',1159,912],['2',1339,920],['1',1266,948],['2',1375,943],['3',1438,941],['3',1473,943],['1',1490,949],['3',1546,943],['3',1572,862]];
  notes.forEach(function (n) { out.push('<text x="' + n[1] + '" y="' + n[2] + '" text-anchor="middle" class="note">' + n[0] + '</text>'); });

  /* chains */
  function chain(d) {
    out.push('<path d="' + d + '" style="fill:none;stroke:#6c6c6c;stroke-width:5;stroke-dasharray:13 2 5 2"/>');
    out.push('<path d="' + d + '" style="fill:none;stroke:#7a1818;stroke-width:2.500;stroke-dasharray:13 2 5 2"/>');
  }
  chain('M557 294.500H1510');
  chain('M545 320V840');
  chain('M555 322V850');
  var HEAD = 'fill:#7c1010;stroke:#8c8c8c;stroke-width:1';
  out.push('<path d="M1509 285l17 9-17 9 4-9z" style="' + HEAD + '"/>');
  out.push('<path d="M536 834l8 17 8-17-8 4z" style="' + HEAD + '"/>');
  out.push('<path d="M546 842l8 18 8-18-8 4z" style="' + HEAD + '"/>');

  /* ellipses */
  [[71,446,36,69,-4],[194,282,59,70,-4],[518,271,73,52,0],[1035,329,29,33,0],[1173,315,35,31,0],[1334,319,36,35,0],[73,771,24,58,0],[207,778,32,73,0],[1037,807,22,34,0],[1150,861,27,44,0],[1323,891,31,34,0]].forEach(function (e) {
    out.push('<ellipse cx="' + e[0] + '" cy="' + e[1] + '" rx="' + e[2] + '" ry="' + e[3] + '" transform="rotate(' + e[4] + ' ' + e[0] + ' ' + e[1] + ')" style="fill:none;stroke:#d80c0c;stroke-width:3.500"/>');
  });

  /* arrows */
  function arrow(x0, y0, x1, y1, w, hw, hl) {
    var dx = x1 - x0, dy = y1 - y0, L = Math.sqrt(dx * dx + dy * dy), ux = dx / L, uy = dy / L, nx = -uy, ny = ux;
    function P(a, b) { return (x0 + ux * a + nx * b).toFixed(1) + ',' + (y0 + uy * a + ny * b).toFixed(1); }
    var neck = L - hl + 5;
    out.push('<polygon points="' + [P(0, -1), P(neck, -w / 2), P(L - hl, -hw), P(L, 0), P(L - hl, hw), P(neck, w / 2), P(0, 1)].join(' ') + '" style="fill:#f80606;stroke:#fff;stroke-width:1;filter:drop-shadow(0 0 1px rgba(255,255,255,.6))"/>');
  }
  arrow(210, 317, 529, 252, 11, 12, 27);
  arrow(206, 742, 536, 837, 11, 13, 28);
  arrow(1043, 330, 1144, 323, 11, 13, 25);
  arrow(1211, 329, 1321, 330, 11, 12, 25);
  arrow(1035, 793, 1329, 892, 11, 12, 26);

  document.getElementById('chart').insertAdjacentHTML('afterbegin', out.join(''));

  /* drawing palette */
  var K = 'stroke="#111"';
  function tx(t, x, y, c) { return '<text x="' + x + '" y="' + y + '"' + (c ? ' class="' + c + '"' : '') + '>' + t + '</text>'; }
  function cjk(t, col) { return '<text x="2.500" y="16" class="cj" style="fill:' + col + '">' + t + '</text>'; }
  var dot = function (x, y) { return '<rect x="' + (x - 1) + '" y="' + (y - 1) + '" width="2.500" height="2.500" fill="#111" stroke="none"/>'; };
  var icons = [
    '<path d="M6 2v13l3-3 3 6 2-1-3-6h4z" ' + K + '/>',
    '<path d="M4 16 16 5"/>' + dot(4, 16) + dot(16, 5),
    '<path d="M2 18 18 3"/>' + dot(10, 10),
    '<path d="M3 17 16 4m-6 0h6v6"/>',
    '<path d="M1 18 19 2"/>' + dot(3, 16) + dot(17, 4),
    '<path d="M1 10h18"/>' + dot(10, 10),
    '<path d="M2 10h16"/>' + dot(4, 10),
    '<path d="M2 10h16"/>' + dot(3, 10) + dot(17, 10),
    '<path d="M10 1v18"/><rect x="9" y="7" width="2.500" height="6" fill="#111" stroke="none"/>',
    tx('123', 3, 10) + '<path d="M2 16h16"/><rect x="2" y="13" width="2" height="3" fill="#1c1c90" stroke="none"/>',
    '<path d="M2 12 12 2M4 17 17 4M8 19 18 9"/>',
    '<path d="M3 13 13 3M5 18 18 5"/>' + dot(8, 8) + dot(12, 12),
    '<path d="M2 18 18 3" stroke-dasharray="6 2"/>' + dot(3, 16) + dot(16, 5),
    '<path d="M7 3c6 0 9 4 9 7s-3 7-9 7"/>',
    '<circle cx="10" cy="10" r="7.500" ' + K + '/><path d="M10 10l4-4" ' + K + '/>',
    '<circle cx="10" cy="10" r="7.500" ' + K + '/><path d="M4 6l12 1-5 9z" ' + K + '/>',
    '<path d="M1 4l4 13 5-11 4 11 5-13"/>',
    '<path d="M1 17l3-7 2 4 3-10 3 10 2-4 4 7"/>',
    '<path d="M2 17l4-5 2 3 5-6 2 2 3-6"/>',
    '<path d="M3 3l5 10 3-6 5 11"/>',
    '<path d="M1 17l4-7 2 2 4-7 4 7 2-1 2 6"/>',
    tx('GP', 2, 9) + '<path d="M2 2h16M2 12h16M2 16h16"/>',
    tx('GA', 2, 9) + '<path d="M2 2h16M2 12h16M2 16h16"/>',
    tx('G', 2, 9) + '<path d="M2 2h16M2 12h16M2 16h16"/>',
    tx('%', 3, 9) + '<path d="M2 3h16M2 10h16M2 13h16M2 17h16" stroke-width=".8"/>',
    tx('T', 4, 9) + '<path d="M2 3h16M2 10h16M2 13h16M2 17h16" stroke-width=".8"/>',
    '<path d="M3 3v15M17 1v15M3 9l14-6M3 13l14-6M3 17l14-6"/>',
    '<path d="M5 3v15M11 3v13M17 1v13M2 10l16-6M2 14l16-6"/>',
    '<path d="M3 3v15M17 3v15M3 16 17 8"/>',
    '<path d="M3 3v15M8 3v15M12 3v15M17 3v15"/>',
    '<path d="M3 3v15M6 3v15M11 3v15M17 3v15" stroke-width="1.300"/>',
    tx('G', 10, 9) + '<path d="M3 3v15M9 3v15M17 3v15"/>',
    '<path d="M2 3v15M5 3v15M8 3v15M11 3v15M14 3v15M18 3v15"/>',
    '<path d="M3 3v15M6 3v15M9 3v15M14 3v15M18 3v15M4.500 3v15" stroke-width="1.600"/>',
    '<path d="M2 3v15M6 3v15M10 3v15M12 3v15M14 3v15M18 3v15"/>',
    '<path d="M2 17 18 3M2 17l16-6M2 17h16M12 8l-2 9" stroke-width=".8"/>',
    '<path d="M2 2v16h16M2 18 18 4M2 18l16-8M2 18l16-3M2 14l8-8"/>',
    '<path d="M10 3v14M3 10l7 7 7-7" stroke-width=".9"/>',
    '<path d="M2 5h16L11 17z" stroke-width="1.300"/>',
    '<rect x="2.500" y="4.500" width="15" height="11" stroke-width="1.300"/>',
    '<path d="M10 4l4 5h-2.500v6h-3V9H6z" fill="#e01010" stroke="none"/>',
    '<path d="M10 16l4-5h-2.500V5h-3v6H6z" fill="#10a030" stroke="none"/>',
    '<path d="M2 18 16 4" ' + K + '/><path d="M13 8l4 5h-2.500v3h-3v-3H9z" fill="#e01010" stroke="none"/>',
    tx('A', 5, 15, 'ab'),
    tx('A', 6, 17, 'ab') + '<path d="M4 2v5M2 4h4" ' + K + '/>',
    '<rect x="3" y="3" width="14" height="14" stroke="#ddd" fill="#eee"/><rect x="6" y="6" width="8" height="8" fill="#ccc" stroke="none"/>',
    '<path d="M4 4l12 12M16 4 4 16" stroke="#e01010" stroke-width="1.500"/>',
    '<path d="M4 17V9h4v8zM8 11l5-6" stroke="#ddd"/><circle cx="14" cy="5" r="3" fill="#f8f040" stroke="none"/>',
    '<rect x="3.500" y="2.500" width="13" height="15" stroke-width="1.200"/><path d="M6 6h8M6 9h8M6 12h8M6 15h8"/>',
    '<rect x="2.500" y="6.500" width="15" height="7" stroke-width="1.200"/><path d="M5 7v3M8 7v3M11 7v3M14 7v3"/>',
    '<rect x="2.500" y="5.500" width="15" height="10" ' + K + '/><rect x="7" y="7" width="6" height="6" fill="#3a9" stroke="none"/>',
    '',
    cjk('上', '#e01010'), cjk('下', '#109030'),
    '<path d="M10 2l5 5H5z" fill="#e01010" stroke="none"/><path d="M10 8l5 4H5z" fill="#e0c010" stroke="none"/><path d="M10 13l5 5H5z" fill="#10a030" stroke="none"/>',
    '',
    cjk('买', '#c81818'), cjk('卖', '#109030'), cjk('平', '#dcdcdc'), ''
  ];
  document.getElementById('pgrid').innerHTML = icons.map(function (i) {
    return '<div class="pi"><svg viewBox="0 0 20 20">' + i + '</svg></div>';
  }).join('');
})();
```
